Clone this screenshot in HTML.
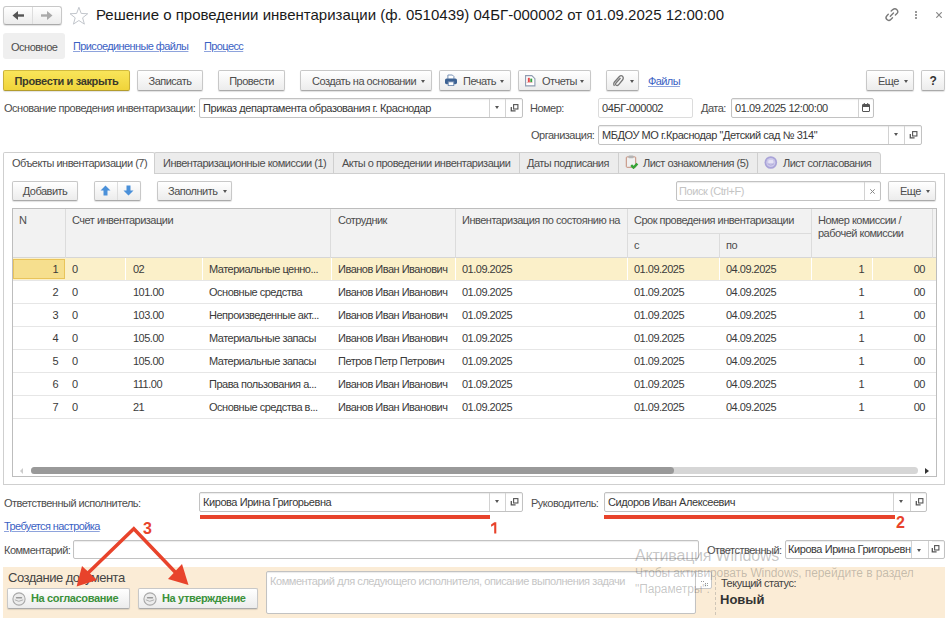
<!DOCTYPE html>
<html><head><meta charset="utf-8">
<style>
html,body{margin:0;padding:0;width:950px;height:623px;overflow:hidden;background:#fff;position:relative}
body{font-family:"Liberation Sans",sans-serif;font-size:11px;color:#4d4d4d;letter-spacing:-0.5px}
.a{position:absolute;white-space:nowrap}
.btn{position:absolute;box-sizing:border-box;border:1px solid #c8c8c8;border-bottom-color:#aaa;border-radius:2px;background:linear-gradient(#fff,#ececec);box-shadow:0 1px 1px rgba(0,0,0,.12);color:#4d4d4d;white-space:nowrap;text-align:center}
.fld{position:absolute;box-sizing:border-box;border:1px solid #c2c2c2;border-radius:2px;background:#fff;box-shadow:inset 0 1px 1px rgba(0,0,0,.08);color:#383838;white-space:nowrap;overflow:hidden;letter-spacing:-0.43px}
.dv{position:absolute;top:0;bottom:0;width:1px;background:#d2d2d2}
.lnk{letter-spacing:-0.6px;color:#3b62c4;text-decoration:underline;text-decoration-color:#8ea3dc}
.tri{position:absolute;width:0;height:0;border-left:2.5px solid transparent;border-right:2.5px solid transparent;border-top:3px solid #555}
.b{font-weight:bold;letter-spacing:-0.35px}
</style></head><body>

<!-- title bar -->
<div class="btn" style="left:3px;top:6px;width:59px;height:19px;border-radius:3px"></div>
<div class="a" style="left:32px;top:7px;width:1px;height:17px;background:#ddd"></div>
<svg class="a" style="left:12px;top:11px" width="13" height="9" viewBox="0 0 13 9"><path d="M0.5 4.5 L6 0 V9 Z" fill="#555"/><rect x="5" y="3.3" width="7" height="2.4" fill="#555"/></svg>
<svg class="a" style="left:40px;top:11px" width="13" height="9" viewBox="0 0 13 9"><path d="M12.5 4.5 L7 0 V9 Z" fill="#aaa"/><rect x="1" y="3.3" width="7" height="2.4" fill="#aaa"/></svg>
<svg class="a" style="left:69px;top:6px" width="20" height="20" viewBox="0 0 20 20"><path d="M9.90 1.30 L12.19 7.44 L18.74 7.73 L13.61 11.81 L15.37 18.12 L9.90 14.50 L4.43 18.12 L6.19 11.81 L1.06 7.73 L7.61 7.44 Z" stroke="#c2c6cc" stroke-width="1" fill="none" stroke-linejoin="miter"/></svg>
<div class="a" style="left:96px;top:5px;font-size:15px;color:#1a1a1a;letter-spacing:0;line-height:20px">Решение о проведении инвентаризации (ф. 0510439) 04БГ-000002 от 01.09.2025 12:00:00</div>
<svg class="a" style="left:884px;top:7px" width="16" height="16" viewBox="0 0 16 16"><g stroke="#7a7a7a" stroke-width="1.4" fill="none" stroke-linecap="round"><path d="M7.2 4.1 L8.8 2.6 Q11 0.8 12.9 2.7 Q14.8 4.7 12.9 6.5 L11.4 7.9"/><path d="M4.3 7.3 L2.9 8.7 Q1 10.7 2.9 12.6 Q4.8 14.5 6.8 12.5 L8.5 10.8"/><path d="M6.3 9.2 L9.5 6.0"/></g></svg>
<div class="a" style="left:914.5px;top:10.5px;width:2px;height:2px;border-radius:1px;background:#777"></div>
<div class="a" style="left:914.5px;top:13.5px;width:2px;height:2px;border-radius:1px;background:#777"></div>
<div class="a" style="left:914.5px;top:16.5px;width:2px;height:2px;border-radius:1px;background:#777"></div>
<svg class="a" style="left:936px;top:12px" width="6" height="6" viewBox="0 0 6 6"><path d="M0.3 0.3 L5.7 5.7 M5.7 0.3 L0.3 5.7" stroke="#888" stroke-width="1.2"/></svg>

<!-- section tabs -->
<div class="a" style="left:3px;top:33px;width:62px;height:26px;background:#efefef;border-radius:3px"></div>
<div class="a" style="left:11px;top:40px;line-height:14px;color:#4d4d4d">Основное</div>
<div class="a lnk" style="left:73px;top:39px;line-height:14px">Присоединенные файлы</div>
<div class="a lnk" style="left:204px;top:39px;line-height:14px">Процесс</div>


<!-- main toolbar -->
<div class="btn b" style="left:3px;top:70px;width:127px;height:21px;line-height:20px;background:linear-gradient(#f9e55a,#f0d43a);border-color:#d2bb3e #c9b038 #b39c2c;color:#3b3a2a">Провести и закрыть</div>
<div class="btn" style="left:137px;top:70px;width:66px;height:21px;line-height:20px">Записать</div>
<div class="btn" style="left:218px;top:70px;width:67px;height:21px;line-height:20px">Провести</div>
<div class="btn" style="left:300px;top:70px;width:132px;height:21px;line-height:20px;text-align:left;padding-left:11px">Создать на основании<span class="tri" style="left:120px;top:9px"></span></div>
<div class="btn" style="left:439px;top:70px;width:72px;height:21px;line-height:20px;text-align:left;padding-left:23px">Печать<span class="tri" style="left:60px;top:9px"></span>
<svg class="a" style="left:5px;top:3px" width="12" height="12" viewBox="0 0 12 12"><path d="M2.9 4.8 V1 H7.4 L8.9 2.5 V4.8" fill="#fff" stroke="#6a86ad" stroke-width="0.9"/><rect x="0" y="4.6" width="12" height="5.6" rx="1.6" fill="#3d6293"/><rect x="3.2" y="7.8" width="5.6" height="3.8" fill="#fff" stroke="#6a86ad" stroke-width="0.9"/></svg></div>
<div class="btn" style="left:518px;top:70px;width:73px;height:21px;line-height:20px;text-align:left;padding-left:23px">Отчеты<span class="tri" style="left:61px;top:9px"></span>
<svg class="a" style="left:6px;top:4px" width="11" height="12" viewBox="0 0 11 12"><path d="M0.6 0.6 H6.8 L9.9 3.7 V10.9 H0.6 Z" fill="#fff" stroke="#8d9bb0" stroke-width="1.1"/><rect x="2.8" y="2.8" width="2" height="4.4" fill="#e34a4a"/><rect x="5.3" y="3.6" width="1.9" height="3.6" fill="#3aa040"/><rect x="1.6" y="7" width="5.8" height="0.8" fill="#e9b0b0"/></svg></div>
<div class="btn" style="left:606px;top:70px;width:33px;height:21px"><span class="tri" style="left:22.5px;top:9px"></span>
<svg class="a" style="left:5px;top:3px" width="12" height="13" viewBox="0 0 12 13"><path d="M8.5 4 L4 9 Q3 10.5 4.2 11.3 Q5.4 12 6.5 10.8 L10.5 6 Q12 4 10.6 2.3 Q9 1 7.4 2.5 L2.5 8 Q1 10 2.5 11.8" stroke="#777" stroke-width="1.3" fill="none"/></svg></div>
<div class="a lnk" style="left:648px;top:74px;line-height:14px">Файлы</div>
<div class="btn" style="left:866px;top:70px;width:48px;height:21px;line-height:20px;text-align:left;padding-left:11px">Еще<span class="tri" style="left:37px;top:9px"></span></div>
<div class="btn b" style="left:921px;top:70px;width:24px;height:21px;line-height:20px;color:#333;font-size:12px">?</div>

<!-- row fields -->
<div class="a" style="left:4px;top:101px;line-height:14px">Основание проведения инвентаризации:</div>
<div class="fld" style="left:199px;top:98px;width:324px;height:20px;line-height:18px;padding-left:3px">Приказ департамента образования г. Краснодар<div class="dv" style="left:289px"></div><div class="dv" style="left:305px"></div><span class="tri" style="left:295px;top:7px"></span>
<svg class="a" style="left:310px;top:5px" width="9" height="9" viewBox="0 0 9 9"><rect x="3.6" y="0.6" width="4.3" height="4.4" fill="none" stroke="#555" stroke-width="1.1"/><path d="M1.3 3 V6.9 H5.6" fill="none" stroke="#555" stroke-width="1.3"/></svg></div>
<div class="a" style="left:530px;top:101px;line-height:14px">Номер:</div>
<div class="fld" style="left:598px;top:98px;width:95px;height:20px;line-height:18px;padding-left:3px;border-color:#dcdcdc;box-shadow:none">04БГ-000002</div>
<div class="a" style="left:701px;top:101px;line-height:14px">Дата:</div>
<div class="fld" style="left:731px;top:98px;width:143px;height:20px;line-height:18px;padding-left:3px">01.09.2025 12:00:00<div class="dv" style="left:126px"></div>
<svg class="a" style="left:130px;top:4px" width="8" height="9" viewBox="0 0 8 9"><rect x="0.5" y="1.5" width="7" height="7" rx="0.5" fill="#fff" stroke="#555"/><rect x="0.5" y="1.5" width="7" height="2.5" fill="#555"/><rect x="1.8" y="0" width="1" height="2" fill="#555"/><rect x="5.2" y="0" width="1" height="2" fill="#555"/></svg></div>

<div class="a" style="left:531px;top:128px;line-height:14px">Организация:</div>
<div class="fld" style="left:598px;top:125px;width:324px;height:20px;line-height:18px;padding-left:3px">МБДОУ МО г.Краснодар "Детский сад № 314"<div class="dv" style="left:289px"></div><div class="dv" style="left:305px"></div><span class="tri" style="left:295px;top:7px"></span>
<svg class="a" style="left:310px;top:5px" width="9" height="9" viewBox="0 0 9 9"><rect x="3.6" y="0.6" width="4.3" height="4.4" fill="none" stroke="#555" stroke-width="1.1"/><path d="M1.3 3 V6.9 H5.6" fill="none" stroke="#555" stroke-width="1.3"/></svg></div>


<!-- tabs -->
<div class="a" style="left:3px;top:173px;width:942px;height:312px;box-sizing:border-box;border:1px solid #cfcfcf"></div>
<div class="a" style="left:154px;top:152px;width:727px;height:22px;box-sizing:border-box;background:#ececec;border:1px solid #cfcfcf;border-radius:2px 3px 0 0"></div>
<div class="a" style="left:333px;top:153px;width:1px;height:20px;background:#cfcfcf"></div>
<div class="a" style="left:519px;top:153px;width:1px;height:20px;background:#cfcfcf"></div>
<div class="a" style="left:618px;top:153px;width:1px;height:20px;background:#cfcfcf"></div>
<div class="a" style="left:757px;top:153px;width:1px;height:20px;background:#cfcfcf"></div>
<div class="a" style="left:3px;top:152px;width:152px;height:22px;box-sizing:border-box;background:#fff;border:1px solid #cfcfcf;border-bottom:none;border-radius:2px 2px 0 0"></div>
<div class="a" style="left:12px;top:156px;line-height:14px">Объекты инвентаризации (7)</div>
<div class="a" style="left:163px;top:156px;line-height:14px">Инвентаризационные комиссии (1)</div>
<div class="a" style="left:342px;top:156px;line-height:14px">Акты о проведении инвентаризации</div>
<div class="a" style="left:527px;top:156px;line-height:14px">Даты подписания</div>
<svg class="a" style="left:625px;top:155px" width="14" height="14" viewBox="0 0 14 14"><rect x="1.3" y="1.9" width="9.4" height="10.4" rx="0.8" fill="#f0f0f0" stroke="#c48c78" stroke-width="1"/><rect x="3.4" y="0.6" width="5.2" height="2.6" rx="1" fill="#b4b4b4"/><path d="M6.2 10.2 L8.5 12.6 L12.4 8.6" stroke="#36a336" stroke-width="2.4" fill="none"/></svg>
<div class="a" style="left:643px;top:156px;line-height:14px">Лист ознакомления (5)</div>
<svg class="a" style="left:764px;top:156px" width="14" height="14" viewBox="0 0 14 14"><circle cx="6.8" cy="6.5" r="6.3" fill="#a9a3d8"/><circle cx="6.8" cy="6.5" r="4.6" fill="#cdc9ea"/><path d="M4.6 4.4 H9" stroke="#e8e6f6" stroke-width="1"/><path d="M4.3 6 H9.3" stroke="#f4f3fb" stroke-width="1.3"/><path d="M3.6 7.8 Q6.8 10.6 10 7.8" stroke="#b3aedc" stroke-width="1" fill="none"/></svg>
<div class="a" style="left:783px;top:156px;line-height:14px">Лист согласования</div>

<!-- inner toolbar -->
<div class="btn" style="left:12px;top:181px;width:66px;height:20px;line-height:18px">Добавить</div>
<div class="btn" style="left:94px;top:181px;width:47px;height:20px"></div>
<div class="a" style="left:117px;top:182px;width:1px;height:18px;background:#ddd"></div>
<svg class="a" style="left:100px;top:185px" width="11" height="11" viewBox="0 0 11 11"><path d="M5.5 0.5 L10.5 5.5 H7.5 V10.5 H3.5 V5.5 H0.5 Z" fill="#4a90d9"/></svg>
<svg class="a" style="left:123px;top:185px" width="11" height="11" viewBox="0 0 11 11"><path d="M5.5 10.5 L10.5 5.5 H7.5 V0.5 H3.5 V5.5 H0.5 Z" fill="#4a90d9"/></svg>
<div class="btn" style="left:157px;top:181px;width:75px;height:20px;line-height:18px;text-align:left;padding-left:10px">Заполнить<span class="tri" style="left:65px;top:8px"></span></div>
<div class="fld" style="left:676px;top:181px;width:205px;height:20px;line-height:18px;padding-left:2px;color:#c4c4c4">Поиск (Ctrl+F)<div class="dv" style="left:187px"></div>
<svg class="a" style="left:193px;top:6.5px" width="5" height="5" viewBox="0 0 5 5"><path d="M0.3 0.3 L4.7 4.7 M4.7 0.3 L0.3 4.7" stroke="#888" stroke-width="1"/></svg></div>
<div class="btn" style="left:888px;top:181px;width:48px;height:20px;line-height:18px;text-align:left;padding-left:11px">Еще<span class="tri" style="left:37px;top:8px"></span></div>

<!-- table -->
<div class="a" style="left:12px;top:208px;width:925px;height:269px;box-sizing:border-box;border:1px solid #bdbdbd"></div>
<div class="a" style="left:13px;top:209px;width:923px;height:49px;background:#f2f2f2;border-bottom:1px solid #d6d6d6;box-sizing:border-box"></div>
<div class="a" style="left:932px;top:209px;width:1px;height:49px;background:#dcdcdc"></div>
<div class="a" style="left:65px;top:209px;width:1px;height:49px;background:#dcdcdc"></div>
<div class="a" style="left:330px;top:209px;width:1px;height:49px;background:#dcdcdc"></div>
<div class="a" style="left:455px;top:209px;width:1px;height:49px;background:#dcdcdc"></div>
<div class="a" style="left:627px;top:209px;width:1px;height:49px;background:#dcdcdc"></div>
<div class="a" style="left:811px;top:209px;width:1px;height:49px;background:#dcdcdc"></div>
<div class="a" style="left:719px;top:234px;width:1px;height:24px;background:#dcdcdc"></div>
<div class="a" style="left:627px;top:233px;width:184px;height:1px;background:#dcdcdc"></div>
<div class="a" style="left:19px;top:213px;line-height:14px">N</div>
<div class="a" style="left:72px;top:213px;line-height:14px">Счет инвентаризации</div>
<div class="a" style="left:338px;top:213px;line-height:14px">Сотрудник</div>
<div class="a" style="left:462px;top:213px;line-height:14px">Инвентаризация по состоянию на</div>
<div class="a" style="left:634px;top:213px;line-height:14px">Срок проведения инвентаризации</div>
<div class="a" style="left:634px;top:238px;line-height:14px">с</div>
<div class="a" style="left:726px;top:238px;line-height:14px">по</div>
<div class="a" style="left:818px;top:214px;line-height:12.6px">Номер комиссии /<br>рабочей комиссии</div>
<div class="a" style="left:13px;top:258px;width:923px;height:23px;background:#fbf0c9;border-bottom:1px solid #e6e6e6;box-sizing:border-box"></div>
<div class="a" style="left:125px;top:258px;width:1px;height:22px;background:#fff"></div>
<div class="a" style="left:202px;top:258px;width:1px;height:22px;background:#fff"></div>
<div class="a" style="left:331px;top:258px;width:1px;height:22px;background:#fff"></div>
<div class="a" style="left:455px;top:258px;width:1px;height:22px;background:#fff"></div>
<div class="a" style="left:627px;top:258px;width:1px;height:22px;background:#fff"></div>
<div class="a" style="left:719px;top:258px;width:1px;height:22px;background:#fff"></div>
<div class="a" style="left:811px;top:258px;width:1px;height:22px;background:#fff"></div>
<div class="a" style="left:872px;top:258px;width:1px;height:22px;background:#fff"></div>
<div class="a" style="left:13px;top:259px;width:52px;height:20px;background:#f6df8e;border:1px solid #e9c45a;box-sizing:border-box"></div>
<div class="a" style="left:13px;top:262px;width:45px;text-align:right;line-height:14px;color:#3a3a3a">1</div>
<div class="a" style="left:72px;top:262px;line-height:14px;color:#3a3a3a">0</div>
<div class="a" style="left:133px;top:262px;line-height:14px;color:#3a3a3a">02</div>
<div class="a" style="left:209px;top:262px;line-height:14px;color:#3a3a3a">Материальные ценно...</div>
<div class="a" style="left:338px;top:262px;line-height:14px;color:#3a3a3a">Иванов Иван Иванович</div>
<div class="a" style="left:462px;top:262px;line-height:14px;color:#3a3a3a">01.09.2025</div>
<div class="a" style="left:634px;top:262px;line-height:14px;color:#3a3a3a">01.09.2025</div>
<div class="a" style="left:726px;top:262px;line-height:14px;color:#3a3a3a">04.09.2025</div>
<div class="a" style="left:820px;top:262px;width:44px;text-align:right;line-height:14px;color:#3a3a3a">1</div>
<div class="a" style="left:879px;top:262px;width:46px;text-align:right;line-height:14px;color:#3a3a3a">00</div>
<div class="a" style="left:13px;top:281px;width:923px;height:23px;background:#fff;border-bottom:1px solid #e6e6e6;box-sizing:border-box"></div>
<div class="a" style="left:13px;top:285px;width:45px;text-align:right;line-height:14px;color:#3a3a3a">2</div>
<div class="a" style="left:72px;top:285px;line-height:14px;color:#3a3a3a">0</div>
<div class="a" style="left:133px;top:285px;line-height:14px;color:#3a3a3a">101.00</div>
<div class="a" style="left:209px;top:285px;line-height:14px;color:#3a3a3a">Основные средства</div>
<div class="a" style="left:338px;top:285px;line-height:14px;color:#3a3a3a">Иванов Иван Иванович</div>
<div class="a" style="left:462px;top:285px;line-height:14px;color:#3a3a3a">01.09.2025</div>
<div class="a" style="left:634px;top:285px;line-height:14px;color:#3a3a3a">01.09.2025</div>
<div class="a" style="left:726px;top:285px;line-height:14px;color:#3a3a3a">04.09.2025</div>
<div class="a" style="left:820px;top:285px;width:44px;text-align:right;line-height:14px;color:#3a3a3a">1</div>
<div class="a" style="left:879px;top:285px;width:46px;text-align:right;line-height:14px;color:#3a3a3a">00</div>
<div class="a" style="left:13px;top:304px;width:923px;height:23px;background:#fff;border-bottom:1px solid #e6e6e6;box-sizing:border-box"></div>
<div class="a" style="left:13px;top:308px;width:45px;text-align:right;line-height:14px;color:#3a3a3a">3</div>
<div class="a" style="left:72px;top:308px;line-height:14px;color:#3a3a3a">0</div>
<div class="a" style="left:133px;top:308px;line-height:14px;color:#3a3a3a">103.00</div>
<div class="a" style="left:209px;top:308px;line-height:14px;color:#3a3a3a">Непроизведенные акт...</div>
<div class="a" style="left:338px;top:308px;line-height:14px;color:#3a3a3a">Иванов Иван Иванович</div>
<div class="a" style="left:462px;top:308px;line-height:14px;color:#3a3a3a">01.09.2025</div>
<div class="a" style="left:634px;top:308px;line-height:14px;color:#3a3a3a">01.09.2025</div>
<div class="a" style="left:726px;top:308px;line-height:14px;color:#3a3a3a">04.09.2025</div>
<div class="a" style="left:820px;top:308px;width:44px;text-align:right;line-height:14px;color:#3a3a3a">1</div>
<div class="a" style="left:879px;top:308px;width:46px;text-align:right;line-height:14px;color:#3a3a3a">00</div>
<div class="a" style="left:13px;top:327px;width:923px;height:23px;background:#fff;border-bottom:1px solid #e6e6e6;box-sizing:border-box"></div>
<div class="a" style="left:13px;top:331px;width:45px;text-align:right;line-height:14px;color:#3a3a3a">4</div>
<div class="a" style="left:72px;top:331px;line-height:14px;color:#3a3a3a">0</div>
<div class="a" style="left:133px;top:331px;line-height:14px;color:#3a3a3a">105.00</div>
<div class="a" style="left:209px;top:331px;line-height:14px;color:#3a3a3a">Материальные запасы</div>
<div class="a" style="left:338px;top:331px;line-height:14px;color:#3a3a3a">Иванов Иван Иванович</div>
<div class="a" style="left:462px;top:331px;line-height:14px;color:#3a3a3a">01.09.2025</div>
<div class="a" style="left:634px;top:331px;line-height:14px;color:#3a3a3a">01.09.2025</div>
<div class="a" style="left:726px;top:331px;line-height:14px;color:#3a3a3a">04.09.2025</div>
<div class="a" style="left:820px;top:331px;width:44px;text-align:right;line-height:14px;color:#3a3a3a">1</div>
<div class="a" style="left:879px;top:331px;width:46px;text-align:right;line-height:14px;color:#3a3a3a">00</div>
<div class="a" style="left:13px;top:350px;width:923px;height:23px;background:#fff;border-bottom:1px solid #e6e6e6;box-sizing:border-box"></div>
<div class="a" style="left:13px;top:354px;width:45px;text-align:right;line-height:14px;color:#3a3a3a">5</div>
<div class="a" style="left:72px;top:354px;line-height:14px;color:#3a3a3a">0</div>
<div class="a" style="left:133px;top:354px;line-height:14px;color:#3a3a3a">105.00</div>
<div class="a" style="left:209px;top:354px;line-height:14px;color:#3a3a3a">Материальные запасы</div>
<div class="a" style="left:338px;top:354px;line-height:14px;color:#3a3a3a">Петров Петр Петрович</div>
<div class="a" style="left:462px;top:354px;line-height:14px;color:#3a3a3a">01.09.2025</div>
<div class="a" style="left:634px;top:354px;line-height:14px;color:#3a3a3a">01.09.2025</div>
<div class="a" style="left:726px;top:354px;line-height:14px;color:#3a3a3a">04.09.2025</div>
<div class="a" style="left:820px;top:354px;width:44px;text-align:right;line-height:14px;color:#3a3a3a">1</div>
<div class="a" style="left:879px;top:354px;width:46px;text-align:right;line-height:14px;color:#3a3a3a">00</div>
<div class="a" style="left:13px;top:373px;width:923px;height:23px;background:#fff;border-bottom:1px solid #e6e6e6;box-sizing:border-box"></div>
<div class="a" style="left:13px;top:377px;width:45px;text-align:right;line-height:14px;color:#3a3a3a">6</div>
<div class="a" style="left:72px;top:377px;line-height:14px;color:#3a3a3a">0</div>
<div class="a" style="left:133px;top:377px;line-height:14px;color:#3a3a3a">111.00</div>
<div class="a" style="left:209px;top:377px;line-height:14px;color:#3a3a3a">Права пользования а...</div>
<div class="a" style="left:338px;top:377px;line-height:14px;color:#3a3a3a">Иванов Иван Иванович</div>
<div class="a" style="left:462px;top:377px;line-height:14px;color:#3a3a3a">01.09.2025</div>
<div class="a" style="left:634px;top:377px;line-height:14px;color:#3a3a3a">01.09.2025</div>
<div class="a" style="left:726px;top:377px;line-height:14px;color:#3a3a3a">04.09.2025</div>
<div class="a" style="left:820px;top:377px;width:44px;text-align:right;line-height:14px;color:#3a3a3a">1</div>
<div class="a" style="left:879px;top:377px;width:46px;text-align:right;line-height:14px;color:#3a3a3a">00</div>
<div class="a" style="left:13px;top:396px;width:923px;height:23px;background:#fff;border-bottom:1px solid #e6e6e6;box-sizing:border-box"></div>
<div class="a" style="left:13px;top:400px;width:45px;text-align:right;line-height:14px;color:#3a3a3a">7</div>
<div class="a" style="left:72px;top:400px;line-height:14px;color:#3a3a3a">0</div>
<div class="a" style="left:133px;top:400px;line-height:14px;color:#3a3a3a">21</div>
<div class="a" style="left:209px;top:400px;line-height:14px;color:#3a3a3a">Основные средства в...</div>
<div class="a" style="left:338px;top:400px;line-height:14px;color:#3a3a3a">Иванов Иван Иванович</div>
<div class="a" style="left:462px;top:400px;line-height:14px;color:#3a3a3a">01.09.2025</div>
<div class="a" style="left:634px;top:400px;line-height:14px;color:#3a3a3a">01.09.2025</div>
<div class="a" style="left:726px;top:400px;line-height:14px;color:#3a3a3a">04.09.2025</div>
<div class="a" style="left:820px;top:400px;width:44px;text-align:right;line-height:14px;color:#3a3a3a">1</div>
<div class="a" style="left:879px;top:400px;width:46px;text-align:right;line-height:14px;color:#3a3a3a">00</div>
<!-- scrollbar -->
<div class="a" style="left:31px;top:467px;width:887px;height:7px;background:#d6d6d6;border-radius:4px"></div>
<div class="a" style="left:31px;top:467px;width:643px;height:7px;background:#999;border-radius:4px"></div>
<div class="a" style="left:20px;top:468px;width:0;height:0;border-top:3px solid transparent;border-bottom:3px solid transparent;border-right:3px solid #ccc"></div>
<div class="a" style="left:925px;top:468px;width:0;height:0;border-top:3px solid transparent;border-bottom:3px solid transparent;border-left:4px solid #333"></div>


<!-- responsible row -->
<div class="a" style="left:4px;top:496px;line-height:14px">Ответственный исполнитель:</div>
<div class="fld" style="left:199px;top:492px;width:324px;height:20px;line-height:18px;padding-left:3px">Кирова Ирина Григорьевна<div class="dv" style="left:289px"></div><div class="dv" style="left:305px"></div><span class="tri" style="left:295px;top:7px"></span>
<svg class="a" style="left:310px;top:5px" width="9" height="9" viewBox="0 0 9 9"><rect x="3.6" y="0.6" width="4.3" height="4.4" fill="none" stroke="#555" stroke-width="1.1"/><path d="M1.3 3 V6.9 H5.6" fill="none" stroke="#555" stroke-width="1.3"/></svg></div>
<div class="a" style="left:531px;top:496px;line-height:14px">Руководитель:</div>
<div class="fld" style="left:604px;top:492px;width:323px;height:20px;line-height:18px;padding-left:3px">Сидоров Иван Алексеевич<div class="dv" style="left:288px"></div><div class="dv" style="left:305px"></div><span class="tri" style="left:294px;top:7px"></span>
<svg class="a" style="left:310px;top:5px" width="9" height="9" viewBox="0 0 9 9"><rect x="3.6" y="0.6" width="4.3" height="4.4" fill="none" stroke="#555" stroke-width="1.1"/><path d="M1.3 3 V6.9 H5.6" fill="none" stroke="#555" stroke-width="1.3"/></svg></div>
<div class="a" style="left:200px;top:515px;width:290px;height:4px;background:#e8432b"></div>
<div class="a" style="left:604px;top:515px;width:291px;height:4px;background:#e8432b"></div>
<svg class="a" style="left:488px;top:520px" width="12" height="16" viewBox="0 0 12 16"><path d="M3.1 4.6 L6.3 2.2 H8.3 V13.5 H6.2 V5.1 L3.1 6.8 Z" fill="#e8432b"/></svg>
<div class="a b" style="left:896px;top:514px;font-size:16px;line-height:18px;color:#e8432b;letter-spacing:0">2</div>

<div class="a lnk" style="left:4px;top:519px;line-height:14px">Требуется настройка</div>
<div class="a" style="left:4px;top:543px;line-height:14px">Комментарий:</div>
<div class="fld" style="left:73px;top:540px;width:626px;height:19px"></div>
<div class="a" style="left:707px;top:543px;line-height:14px">Ответственный:</div>
<div class="fld" style="left:785px;top:540px;width:160px;height:19px;line-height:17px;padding-left:2px">Кирова Ирина Григорьевн<div class="a" style="left:126px;top:0;bottom:0;width:20px;background:#fff"></div><div class="dv" style="left:125px"></div><div class="dv" style="left:142px"></div><span class="tri" style="left:131px;top:8px"></span>
<svg class="a" style="left:145px;top:4px" width="9" height="9" viewBox="0 0 9 9"><rect x="3.6" y="0.6" width="4.3" height="4.4" fill="none" stroke="#555" stroke-width="1.1"/><path d="M1.3 3 V6.9 H5.6" fill="none" stroke="#555" stroke-width="1.3"/></svg></div>

<!-- bottom panel -->
<div class="a" style="left:3px;top:567px;width:942px;height:51px;background:#fbecd6"></div>
<div class="a" style="left:8px;top:570px;font-size:13px;line-height:15px;letter-spacing:-0.5px;color:#444">Создание документа</div>
<div class="btn b" style="left:7px;top:588px;width:123px;height:21px;line-height:19px;text-align:left;padding-left:23px;color:#3a913a">На согласование
<svg class="a" style="left:4px;top:3px" width="14" height="14" viewBox="0 0 14 14"><circle cx="7" cy="7" r="6.1" fill="#ececec" stroke="#a8a8a8" stroke-width="1.1"/><path d="M4.5 5.8 H9.5" stroke="#999" stroke-width="1.4" stroke-linecap="round"/><path d="M2.8 7.8 Q6.5 10.8 11.2 7.8" fill="none" stroke="#b0b0b0" stroke-width="1"/></svg></div>
<div class="btn b" style="left:138px;top:588px;width:120px;height:21px;line-height:19px;text-align:left;padding-left:23px;color:#3a913a">На утверждение
<svg class="a" style="left:4px;top:3px" width="14" height="14" viewBox="0 0 14 14"><circle cx="7" cy="7" r="6.1" fill="#ececec" stroke="#a8a8a8" stroke-width="1.1"/><path d="M4.5 5.8 H9.5" stroke="#999" stroke-width="1.4" stroke-linecap="round"/><path d="M2.8 7.8 Q6.5 10.8 11.2 7.8" fill="none" stroke="#b0b0b0" stroke-width="1"/></svg></div>
<div class="fld" style="left:266px;top:571px;width:430px;height:43px;padding:3px 0 0 3px;color:#c6c6c6">Комментарий для следующего исполнителя, описание выполнения задачи</div>
<div class="a" style="left:695px;top:571px;width:17px;height:18px;box-sizing:border-box;background:#fff;border:1px solid #c8c8c8;border-radius:0 2px 2px 0"></div><svg class="a" style="left:701px;top:581px" width="7" height="6" viewBox="0 0 7 6"><g fill="#999"><rect x="0" y="0" width="1" height="1"/><rect x="2" y="0" width="1" height="1"/><rect x="4" y="2" width="1" height="1"/><rect x="4" y="4" width="1" height="1"/><rect x="6" y="2" width="1" height="1"/><rect x="6" y="4" width="1" height="1"/></g></svg>
<div class="a" style="left:715px;top:577px;width:0;height:38px;border-left:1px dashed #cfc6b8"></div>
<div class="a" style="left:721px;top:577px;line-height:13px;color:#444">Текущий статус:</div>
<div class="a" style="left:720px;top:592px;font-size:13px;line-height:16px;font-weight:bold;color:#333;letter-spacing:0">Новый</div>

<!-- arrows -->
<svg class="a" style="left:0;top:0" width="950" height="623" viewBox="0 0 950 623">
<g stroke="#e8432b" stroke-width="3.5" fill="none" stroke-linecap="butt" stroke-linejoin="miter">
<path d="M86 575 L133.8 528.8 L177 574"/>
</g>
<path d="M76.6 586.5 L82 566 L97 580 Z" fill="#e8432b"/>
<path d="M188.5 585 L168 579 L182 564 Z" fill="#e8432b"/>
<text x="143" y="533.8" font-family="Liberation Sans" font-weight="bold" font-size="16" fill="#e8432b">3</text>
</svg>

<!-- watermark -->
<div class="a" style="left:635px;top:547px;font-size:16px;line-height:18px;letter-spacing:-0.2px;color:rgba(80,80,80,.33)">Активация Windows</div>
<div class="a" style="left:635px;top:566px;font-size:12px;line-height:14px;letter-spacing:-0.1px;color:rgba(80,80,80,.33)">Чтобы активировать Windows, перейдите в раздел</div>
<div class="a" style="left:635px;top:582px;font-size:12px;line-height:14px;letter-spacing:-0.1px;color:rgba(80,80,80,.33)">"Параметры".</div>

</body></html>
